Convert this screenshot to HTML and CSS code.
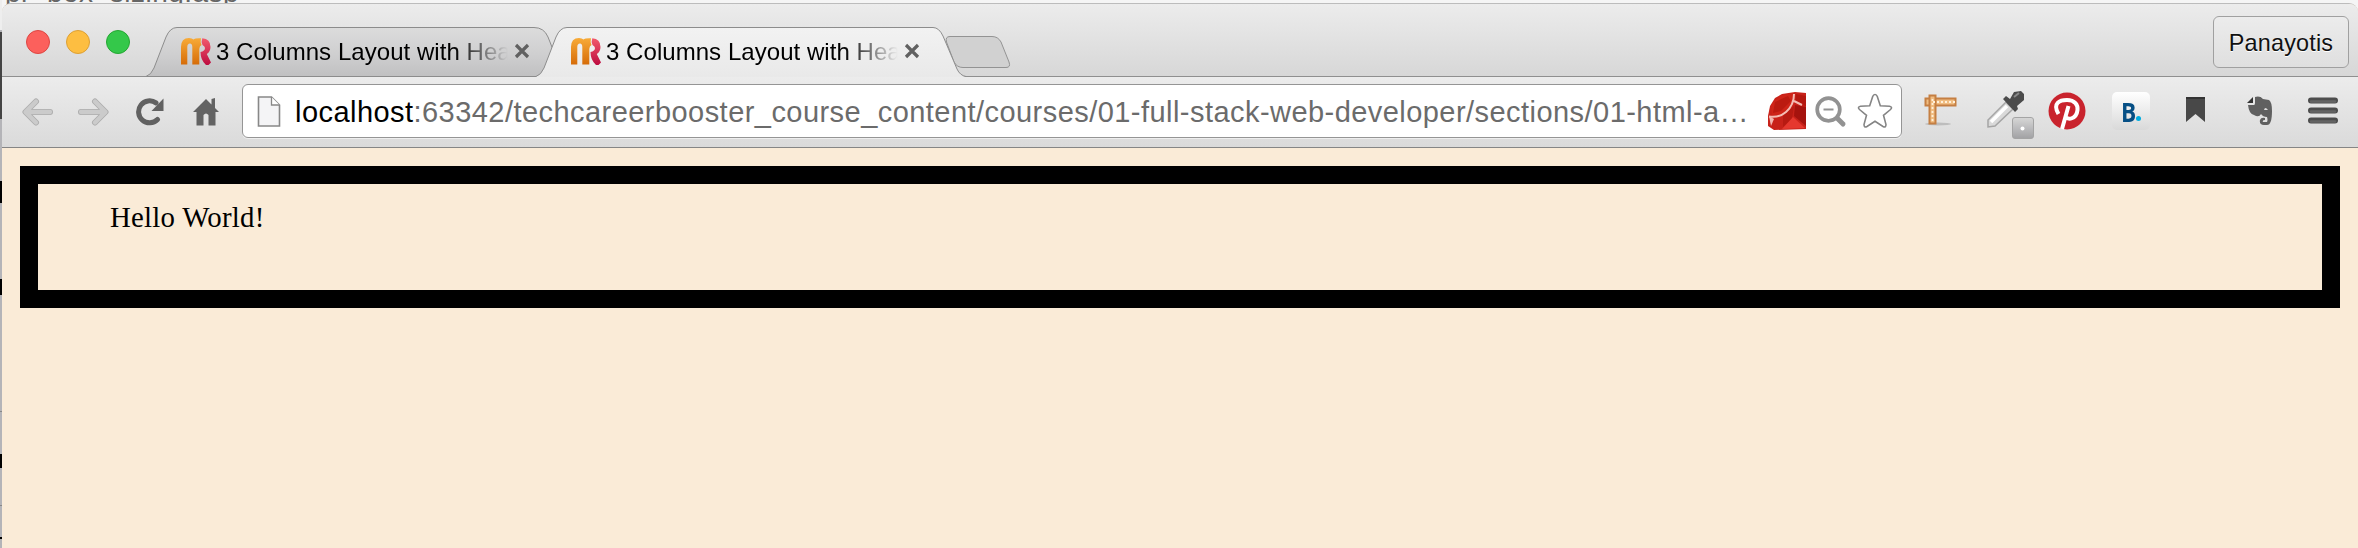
FILE: index.html
```html
<!DOCTYPE html>
<html lang="en">
<head>
<meta charset="utf-8">
<title>3 Columns Layout with Header</title>
<link rel="stylesheet" href="styles.css">
</head>
<body>
<div class="desktop">
  <div class="behind-text">pr_box_sizing.asp</div>
  <svg class="behind-edge" width="2" height="548"><path fill="#b4b4b8" d="M0 0h2v548H0z"/><path fill="#444" d="M0 32h2v87H0z"/><path fill="#eee" d="M0 0h2v30H0z"/><path d="M0 181h2v22H0zM0 279h2v16H0zM0 454h2v14H0zM0 537h2v2H0z"/><path fill="#888" d="M0 411h2v1H0zM0 505h2v1H0z"/></svg>
  <div class="window">
    <header class="tabstrip">
      <div class="lights">
        <span class="light red"></span><span class="light amber"></span><span class="light green"></span>
      </div>
      <div class="tabs">
        <div class="tab">
          <svg class="shape" width="414" height="50" viewBox="0 0 414 50">
            <defs><linearGradient id="tabBack" x2="0" y2="1"><stop stop-color="#dcdcdc"/><stop offset=".55" stop-color="#cfcfd0"/><stop offset="1" stop-color="#c0c0c1"/></linearGradient></defs>
            <path d="M0 49.500Q5 48 8 41L20 10Q24 .5 31 .5H388Q398 .5 402 10L415 43L410 49.500Z" fill="url(#tabBack)" stroke="#8c8c8c"/>
          </svg>
          <svg class="favicon" width="32" height="30" viewBox="0 0 32 30"><use href="#logo"/></svg>
          <span class="tab-title">3 Columns Layout with Hea</span>
          <svg class="close" width="16" height="16" viewBox="0 0 16 16"><path d="M2 2l12 12M14 2L2 14"/></svg>
        </div>
        <div class="tab active">
          <svg class="shape" width="424" height="50" viewBox="0 0 424 50">
            <defs><linearGradient id="tabFront" x2="0" y2="1"><stop stop-color="#f2f2f2"/><stop offset="1" stop-color="#e9e9e9"/></linearGradient></defs>
            <path d="M0 50V49.500Q5 48 8 41L20 10Q24 .5 31 .5H397Q403 .5 407 9L421 42Q424 48.500 430 50Z" fill="url(#tabFront)"/>
            <path d="M0 49.500Q5 48 8 41L20 10Q24 .5 31 .5H397Q403 .5 407 9L421 42Q424 48.500 430 49.500" fill="none" stroke="#8c8c8c"/>
          </svg>
          <svg class="favicon" width="32" height="30" viewBox="0 0 32 30">
            <defs>
              <linearGradient id="orange" x2="0" y2="1"><stop stop-color="#f8ab38"/><stop offset="1" stop-color="#d66c08"/></linearGradient>
              <linearGradient id="pink" x2="0" y2="1"><stop stop-color="#f25a6c"/><stop offset="1" stop-color="#bd0c40"/></linearGradient>
              <g id="logo">
                <path fill="url(#orange)" d="M1 27.500V10Q1 1 9 1Q12 1 13.500 2.500Q15 1 21 1.300Q20 5 21.500 8Q19.500 9 19.300 12V27.500H12.300V10Q12.300 6.500 10 6.500Q7.300 6.500 7.300 10V27.500Z"/>
                <path fill="url(#pink)" d="M22.300 1.300Q30.500 2 30.500 10Q30.500 14.500 26.800 17L31 25.500L28.500 28H26Q20.500 23 20.500 15Q25 14 25 11Q25 9.300 22.500 8Q21 5 22.300 1.300Z"/>
              </g>
            </defs><use href="#logo"/></svg>
          <span class="tab-title">3 Columns Layout with Hea</span>
          <svg class="close" width="16" height="16" viewBox="0 0 16 16"><path d="M2 2l12 12M14 2L2 14"/></svg>
        </div>
        <svg class="new-tab" width="66" height="34" viewBox="0 0 66 34"><path d="M5 1.500H47Q53 1.500 56 7L64 27Q66 32.500 61 32.500H18Q12 32.500 9 27L1.500 7Q0 1.500 5 1.500Z" fill="#d1d1d1" stroke="#939393"/></svg>
      </div>
      <div class="profile">Panayotis</div>
    </header>

    <nav class="toolbar">
      <div class="nav-icons">
        <svg width="32" height="28" viewBox="0 0 32 28"><path d="M4 14H28M14 3.500L3.500 14L14 24.500" fill="none" stroke="#adadad" stroke-width="6" stroke-linecap="round" stroke-linejoin="round"/><path d="M4 14H28M14 3.500L3.500 14L14 24.500" fill="none" stroke="#cbcbcb" stroke-width="4.300" stroke-linecap="round" stroke-linejoin="round"/></svg>
        <svg width="32" height="28" viewBox="0 0 32 28"><path d="M28 14H4M18 3.500L28.500 14L18 24.500" fill="none" stroke="#adadad" stroke-width="6" stroke-linecap="round" stroke-linejoin="round"/><path d="M28 14H4M18 3.500L28.500 14L18 24.500" fill="none" stroke="#cbcbcb" stroke-width="4.300" stroke-linecap="round" stroke-linejoin="round"/></svg>
        <svg width="28" height="28" viewBox="0 0 28 28"><path d="M21.500 21.500A11 11 0 1 1 20 4.900" fill="none" stroke="#616161" stroke-width="5" stroke-linecap="round"/><path d="M27.500 .5V13H15.500Z" fill="#616161"/></svg>
        <svg width="26" height="28" viewBox="0 0 26 28"><path d="M0 14L13 1L18.500 6.500V1L22 0V10L26 14H22.500V27.500H15.500V17Q13 14 10.500 17V27.500H3.500V14Z" fill="#636363"/></svg>
      </div>
      <div class="omnibox">
        <svg class="page-icon" width="24" height="32" viewBox="0 0 24 32"><path d="M1.500 1H14.500L22.500 9V30H1.500Z" fill="#f4f4f6" stroke="#888" stroke-width="1.600"/><path d="M14.500 1V9H22.500" fill="#fff" stroke="#888" stroke-width="1.300"/></svg>
        <div class="url"><span class="host">localhost</span>:63342/techcareerbooster_course_content/courses/01-full-stack-web-developer/sections/01-html-a…</div>
        <svg class="ruby" width="38" height="38" viewBox="0 0 38 38">
          <path d="M14 2L27 0L38 1V37L6 38L0 34V24L2 14L7 6Z" fill="#c8221a"/>
          <path d="M12 4L25 1L24 11L14 22L4 23L3 13Z" fill="#cf2418"/>
          <path d="M7 10L20 4L23 9L13 19L5 21Z" fill="#bb1a10"/>
          <path d="M28 2L38 4V14L27 11Z" fill="#b51810"/>
          <path d="M27 13L38 15V34L26 24Z" fill="#a5130e"/>
          <path d="M15 24L26 14L24 27L15 35Z" fill="#b71a12"/>
          <path d="M25 25L37 36L14 37Z" fill="#e5382f"/>
          <path d="M1 24L6 27L3 34Z" fill="#f3b8b2"/>
          <path d="M1 24.500Q11 26 18 20Q26 13 26 2M26 9L34 13" fill="none" stroke="#f4bdb4" stroke-width="2"/>
        </svg>
        <svg class="lens" width="32" height="32" viewBox="0 0 32 32"><path d="M21 21L28 28" stroke="#929292" stroke-width="5" stroke-linecap="round"/><circle cx="13.500" cy="13.500" r="11.300" fill="#fff" stroke="#929292" stroke-width="3.700"/><path d="M8.500 13.500h10" stroke="#929292" stroke-width="2"/></svg>
        <svg class="star" width="36" height="36" viewBox="0 0 36 36"><path d="M18 1.500Q19.600 1.500 20.300 3.500L23.300 12.800L32.500 13.200Q36 14 33.500 16.500L26.500 22.300L29 31.500Q29 35 26 33.500L18 28.300L10 33.500Q7 35 7 31.500L9.500 22.300L2.500 16.500Q0 14 3.500 13.200L12.700 12.800L15.700 3.500Q16.400 1.500 18 1.500Z" fill="#fff" stroke="#858585" stroke-width="1.600"/></svg>
      </div>
      <div class="extensions">
        <svg class="ruler" width="34" height="32" viewBox="0 0 34 32"><ellipse cx="14" cy="30" rx="13" ry="1.500" fill="#bdbdbd"/><path d="M1.500 4.500H31.500V11.500H1.500Z" fill="#f0bd82" stroke="#c57f42" stroke-width="2"/><path d="M5.500 1.500H11.500V29.500H5.500Z" fill="#f0bd82" stroke="#c57f42" stroke-width="2"/><path d="M9 8H31M8.500 5V28" stroke="#fff0d9" stroke-width="1.800" stroke-dasharray="2 2"/></svg>
        <svg class="dropper" width="48" height="50" viewBox="0 0 48 50"><path d="M2 37V30L20 12L27 19L9 36Z" fill="#d9d9d9" stroke="#a5a5a5" stroke-width="1.500"/><path d="M5 32L21 16" stroke="#fff" stroke-width="3.500"/><path d="M17 9L20 6L24 9L28 2L35 1L38 4V10L31 16L32 19L29 22Z" fill="#4b4b4b"/><path d="M28 7L33 3" stroke="#888" stroke-width="2"/><defs><linearGradient id="badge" x2="0" y2="1"><stop stop-color="#d7d7d7"/><stop offset="1" stop-color="#a1a1a4"/></linearGradient></defs><rect x="26.500" y="27.500" width="21" height="21" rx="2.500" fill="url(#badge)" stroke="#a4a4a4"/><circle cx="36.500" cy="38.500" r="2" fill="#fff"/></svg>
        <svg class="pin" width="38" height="38" viewBox="0 0 38 38"><circle cx="19" cy="19" r="18.500" fill="#c9232d"/><path d="M10.500 22C4 11 12 8 19 8c8 0 11 5 10.500 10-1 9-10 11-12.500 6M20.500 14L14 37" fill="none" stroke="#fff" stroke-width="4"/></svg>
        <div class="booking"><b>B</b><i></i></div>
        <svg class="bookmark" width="19" height="26" viewBox="0 0 19 26"><path d="M0 0H19V25L9.500 17L0 25Z" fill="#484848"/><path d="M0 1H19" stroke="#333" stroke-width="2"/></svg>
        <svg class="elephant" width="26" height="30" viewBox="0 0 26 30"><path d="M8 1Q13-.5 16 3L22 4Q25 6 25 15Q25 29 20 29H17Q12 29 13 24Q14 21 18 22V24Q15 24 16 26H20Q21 24 20 21Q16 21 14 18Q12 22 7 19Q2 18 1 9H7Q8 9 8 7Z" fill="#606060"/><path d="M6 1V7H0Z" fill="#333"/><path d="M17 14Q18 10 21 14Z" fill="#ddd"/></svg>
        <svg class="menu" width="30" height="28" viewBox="0 0 30 28"><path d="M3 3.500H27M3 13.500H27M3 23.500H27" stroke="#4d4d4d" stroke-width="6" stroke-linecap="round"/><path d="M3 4.500H27M3 14.500H27M3 24.500H27" stroke="#646464" stroke-width="2.500" stroke-linecap="round"/></svg>
      </div>
    </nav>

    <main class="page"><div class="box">Hello World!</div></main>
  </div>
</div>
</body>
</html>
```
FILE: styles.css
```css
* { box-sizing: border-box; }
body { margin: 0; font-family: "Liberation Sans", Arial, sans-serif; }
svg { display: block; flex: none; }

.desktop { position: relative; width: 2358px; height: 548px; padding: 3px 0 0 2px; overflow: hidden; background: #f5f5f5; }
.behind-text { position: absolute; left: 5px; top: -23px; font-size: 28px; line-height: 32px; letter-spacing: .5px; color: #666; }
.behind-edge { position: absolute; left: 0; top: 0; }

.window { position: relative; display: flex; flex-direction: column; height: 545px; border-top: 1px solid #bcbcbc; border-radius: 9px 9px 0 0; overflow: hidden; background: #faebd7; }

.tabstrip { display: flex; height: 73px; flex: none; background: linear-gradient(#ececec, #d7d7d7); border-bottom: 1px solid #8f8f8f; }
.lights { display: flex; gap: 16px; width: 144px; padding: 26px 0 0 24px; }
.light { width: 24px; height: 24px; border-radius: 50%; border: 1px solid; }
.red { background: #fc605c; border-color: #de4642; }
.amber { background: #fdbe41; border-color: #dda034; }
.green { background: #34c84a; border-color: #24a732; }

.tabs { display: flex; flex: 1; padding-top: 23px; }
.tab { position: relative; display: flex; width: 390px; height: 50px; padding-left: 34px; }
.active { z-index: 1; width: 400px; }
.shape { position: absolute; left: 0; top: 0; overflow: visible; }
.favicon { position: relative; margin-top: 10px; }
.tab-title { position: relative; margin: 11px 0 0 4px; width: 292px; height: 30px; white-space: nowrap; font-size: 24px; line-height: 28px; letter-spacing: .05px; color: #000; -webkit-mask-image: linear-gradient(90deg, #000 238px, transparent 292px); mask-image: linear-gradient(90deg, #000 238px, transparent 292px); }
.close { position: relative; margin: 16px 0 0 6px; fill: none; stroke: #616161; stroke-width: 3.200; }
.new-tab { margin: 8px 0 0 9px; }

.profile { width: 136px; height: 52px; margin: 12px 9px 0 0; border: 1px solid #a0a0a0; border-radius: 6px; background: linear-gradient(#ececec, #dfdfdf); font-size: 23.400px; letter-spacing: .2px; line-height: 53px; text-align: center; color: #111; text-shadow: 0 1px #fff; }

.toolbar { display: flex; flex: none; height: 71px; padding-top: 7px; background: linear-gradient(#ececec, #dadada); border-bottom: 1px solid #858585; }
.nav-icons { display: flex; width: 240px; padding: 14px 0 0 20px; }
.nav-icons svg:nth-child(2) { margin-left: 23px; }
.nav-icons svg:nth-child(3) { margin-left: 27px; }
.nav-icons svg:nth-child(4) { margin-left: 29px; }
.omnibox { display: flex; width: 1660px; height: 54px; border: 1px solid #959595; border-radius: 6px; background: #fff; box-shadow: 0 1px #eee; }
.page-icon { margin: 11px 0 0 14px; }
.url { width: 1470px; margin-left: 14px; white-space: nowrap; font-size: 29px; letter-spacing: .45px; line-height: 54px; color: #6b6b6b; }
.host { color: #000; }
.ruby { margin: 7px 0 0 3px; }
.lens { margin: 11px 0 0 9px; }
.star { margin: 8px 0 0 10px; }

.extensions { display: flex; }
.ruler { margin: 10px 0 0 22px; }
.dropper { margin: 6px 0 0 28px; }
.pin { margin: 8px 0 0 14px; }
.booking { display: flex; align-items: flex-end; width: 38px; height: 38px; margin: 8px 0 0 26px; padding: 0 0 9px 9px; border-radius: 5px; background: linear-gradient(#fff, #d9d9d9); }
.booking b { width: 15px; height: 19px; font: 700 26px/20px "Open Sans", sans-serif; color: #064f85; transform: scaleX(.87); transform-origin: left; }
.booking i { width: 5px; height: 5px; border-radius: 50%; background: #00aee0; }
.bookmark { margin: 13px 0 0 36px; }
.elephant { margin: 12px 0 0 42px; }
.menu { margin: 13px 0 0 35px; }

.page { flex: 1; padding: 18px 18px 0; }
.box { height: 142px; border: 18px solid #000; padding: 17px 72px; font-family: "Liberation Serif", "Times New Roman", serif; font-size: 28.800px; letter-spacing: .25px; line-height: 33px; color: #000; }
```
